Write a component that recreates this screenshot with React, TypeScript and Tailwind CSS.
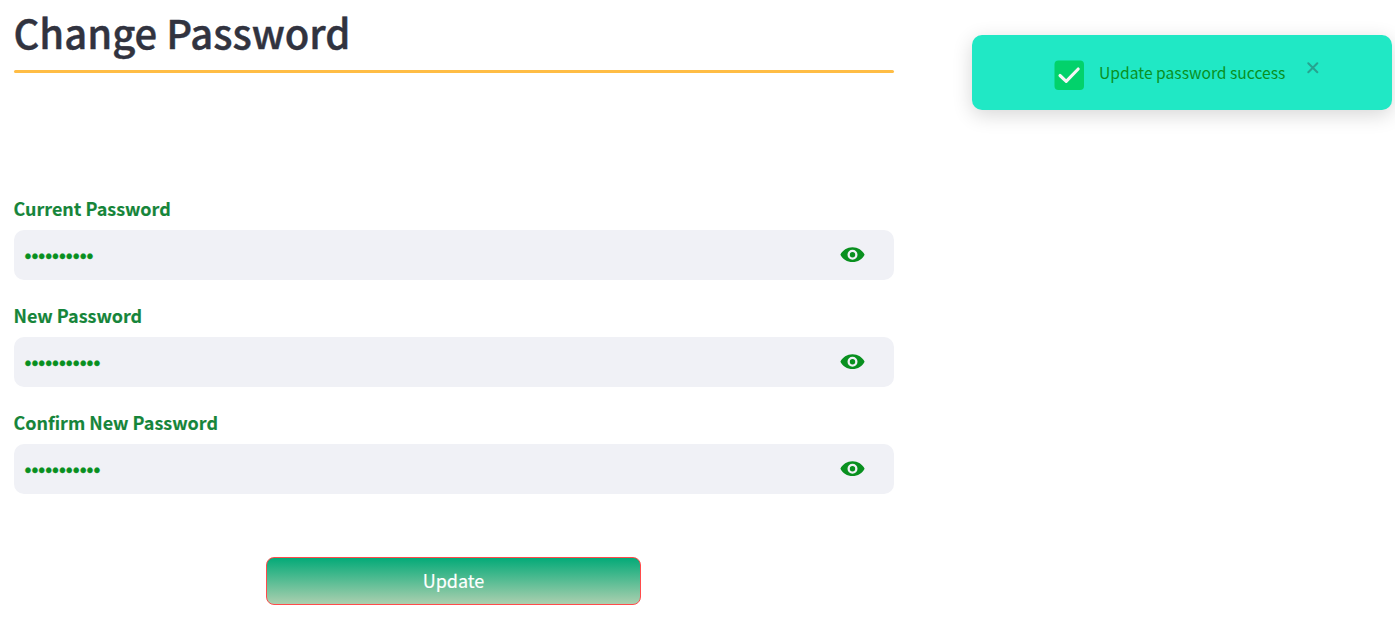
import React from "react";

const fields = [
  { label: "Current Password", length: 10 },
  { label: "New Password", length: 11 },
  { label: "Confirm New Password", length: 11 },
];

function EyeIcon() {
  return (
    <svg width="25" height="16" viewBox="0 0 25 16" className="mb-px shrink-0" fill="#09901f" aria-label="Show password">
      <path
        fillRule="evenodd"
        d="M12.5 0.3C7.2 .3 2.5 3.3.4 7.7c2.1 4.4 6.8 7.4 12.1 7.4s10-3 12.1-7.4C22.500 3.300 17.800.3 12.500.3Zm0 12.400a5 5 0 1 1 0-10 5 5 0 0 1 0 10Zm0-7.700a2.700 2.700 0 1 0 0 5.400 2.700 2.700 0 0 0 0-5.400Z"
      />
    </svg>
  );
}

function PasswordField({ label, length }: { label: string; length: number }) {
  return (
    <div className="flex flex-col">
      <label className="-mt-[3px] -ml-[0.5px] h-[33px] text-[17.95px] leading-[22px] font-bold whitespace-nowrap text-[#16853a] [-webkit-text-stroke:0.15px_#16853a]">{label}</label>
      <div className="flex h-[50px] items-center justify-between rounded-[10px] bg-[#f0f1f6] pr-[29px] pl-[10.5px]">
        <span className="pt-[2px] font-['Liberation_Sans',sans-serif] text-[19.7px] leading-[24px] text-[#09901f] [-webkit-text-stroke:0.3px_#09901f]">
          {"•".repeat(length)}
        </span>
        <EyeIcon />
      </div>
    </div>
  );
}

function Toast() {
  return (
    <div className="absolute top-[35px] left-[972px] flex h-[75px] w-[420px] items-start rounded-[10px] bg-[#20e8c5] pt-[25px] pl-[82px] shadow-[0_5px_20px_rgba(0,0,0,0.16)]">
      <svg width="30" height="30" viewBox="0 0 30 30" className="shrink-0">
        <rect width="29.500" height="29.500" rx="4" fill="#02d26b" x="0.500" y="0.500" />
        <path d="M6 15.500 12.200 21.300 24.200 9" fill="none" stroke="#f6f6f6" strokeWidth="3.100" strokeLinecap="round" strokeLinejoin="round" />
      </svg>
      <span className="ml-[15px] w-[186px] text-[15.65px] leading-[26px] whitespace-nowrap text-[#09901f]">Update password success</span>
      <svg width="12" height="12" viewBox="0 0 12 12" className="mt-[2px] ml-[21.5px] shrink-0">
        <path d="M1.300 1.300l9 9M10.300 1.300l-9 9" stroke="#26a390" strokeWidth="2" strokeLinecap="round" />
      </svg>
    </div>
  );
}

export default function App() {
  return (
    <main className="relative h-[624px] w-[1395px] overflow-hidden bg-white font-['Noto_Sans_CJK_SC',sans-serif]">
      <div className="flex w-[894px] flex-col pl-[14px]">
        <h1 className="-ml-[0.5px] h-[70px] pt-[4px] text-[40px] leading-[56px] font-medium whitespace-nowrap text-[#31333f] [-webkit-text-stroke:0.45px_#31333f]">Change Password</h1>
        <div className="h-[3px] rounded-full bg-[#ffbd45]" />
        <form className="mt-[127px] flex flex-col gap-[27px]">
          {fields.map((field) => (
            <PasswordField key={field.label} label={field.label} length={field.length} />
          ))}
          <button
            type="button"
            className="mt-[36px] ml-[252px] h-[48px] w-[375px] rounded-[8px] border border-[#ff4b4b] bg-[linear-gradient(#04aa78,#abcfaf)] pb-[2px] text-[18px] leading-[24px] text-white [-webkit-text-stroke:0.15px_white]"
          >
            Update
          </button>
        </form>
      </div>
      <Toast />
    </main>
  );
}
